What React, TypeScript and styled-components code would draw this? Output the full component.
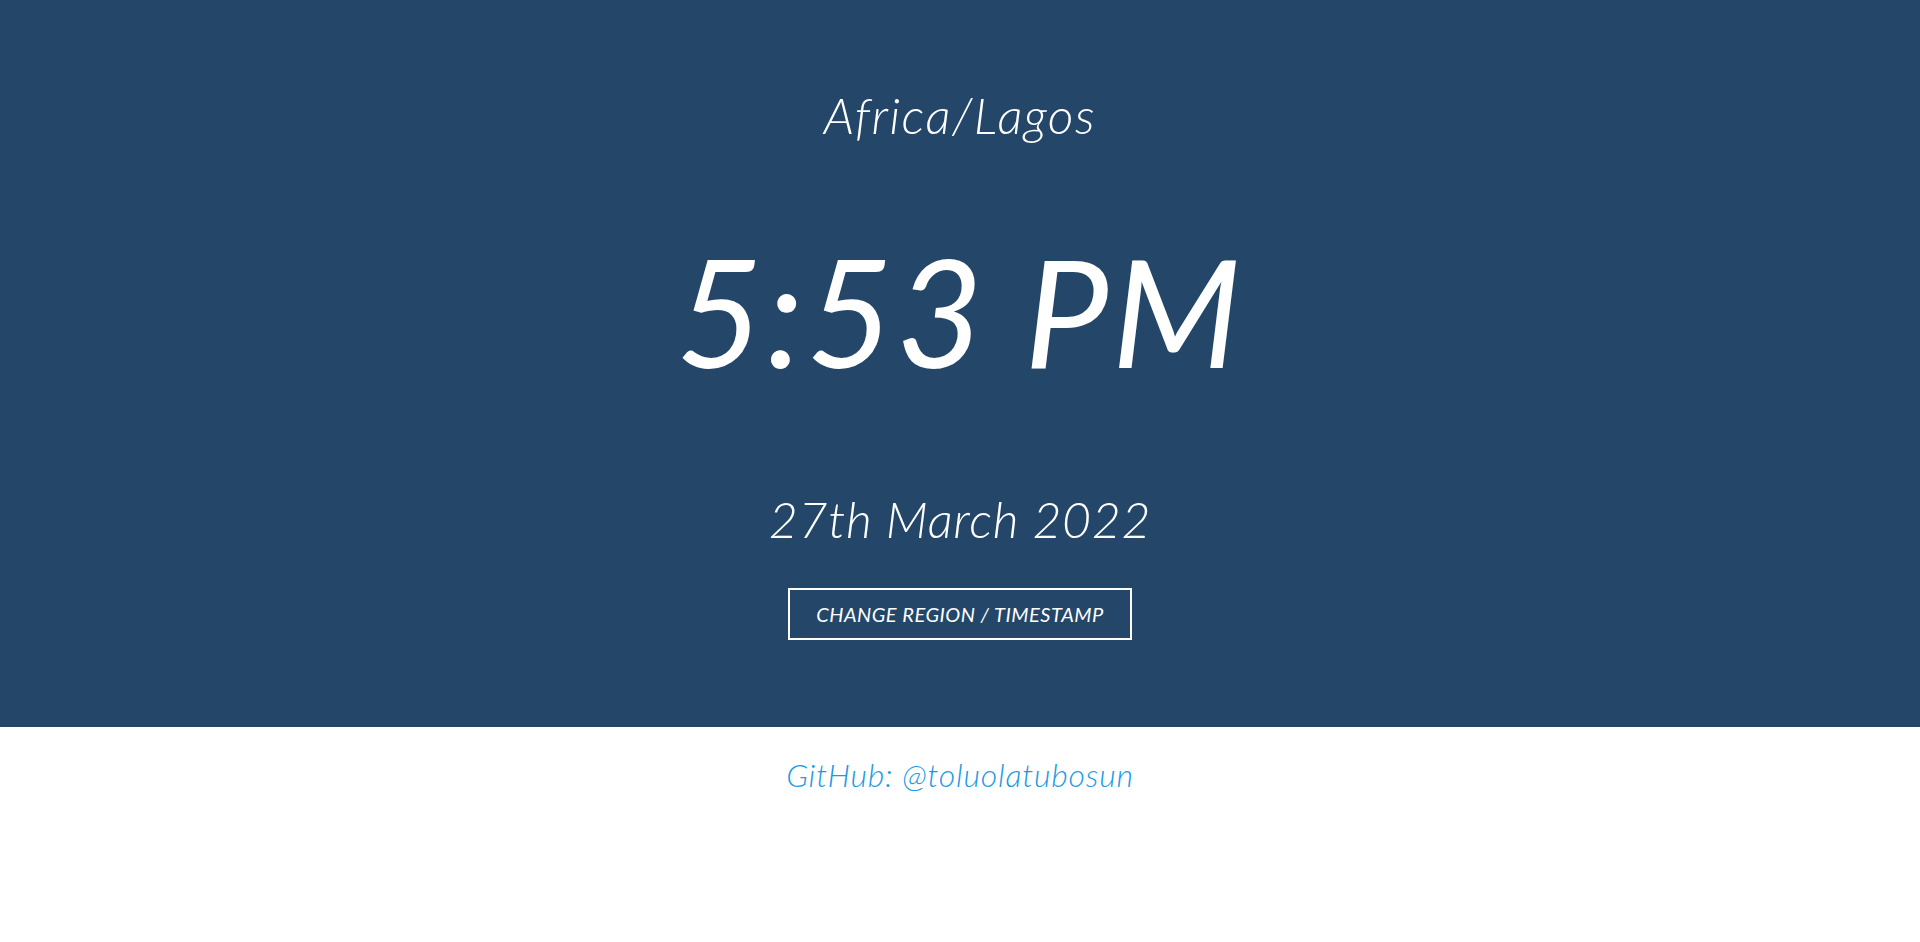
import React from "react";
import styled, { createGlobalStyle } from "styled-components";

const Global = createGlobalStyle`
  html, body { margin: 0; padding: 0; background: #ffffff; }
  body { font-family: "Lato", "Noto Sans", sans-serif; }
`;

const Page = styled.div`
  display: flex;
  flex-direction: column;
  min-height: 942px;
`;

const Hero = styled.section`
  background: #234669;
  height: 727px;
  display: flex;
  flex-direction: column;
  align-items: center;
  color: #ffffff;
  font-style: italic;
  font-weight: 300;
`;

const Region = styled.h2`
  margin: 0;
  margin-top: 85px;
  font-size: 50px;
  line-height: 60px;
  font-weight: 300;
  letter-spacing: 1.5px;
`;

const Time = styled.h1`
  margin: 0;
  margin-top: 85px;
  font-size: 150px;
  line-height: 160px;
  font-weight: 400;
  letter-spacing: 3px;
`;

const DateText = styled.h3`
  margin: 0;
  margin-top: 99px;
  font-size: 50px;
  line-height: 60px;
  font-weight: 300;
  letter-spacing: 0.7px;
`;

const ChangeButton = styled.button`
  margin-top: 39px;
  width: 344px;
  height: 52px;
  background: transparent;
  border: 2px solid #ffffff;
  color: #ffffff;
  font-family: inherit;
  font-style: italic;
  font-weight: 400;
  font-size: 20px;
  letter-spacing: 0.5px;
  cursor: pointer;
`;

const Footer = styled.footer`
  display: flex;
  justify-content: center;
  padding-top: 30px;
`;

const Link = styled.a`
  color: #1c9ae6;
  font-style: italic;
  font-weight: 300;
  font-size: 32px;
  line-height: 36px;
  letter-spacing: 0.8px;
  text-decoration: none;
`;

export default function App() {
  return (
    <Page>
      <Global />
      <Hero>
        <Region>Africa/Lagos</Region>
        <Time>5:53 PM</Time>
        <DateText>27th March 2022</DateText>
        <ChangeButton>CHANGE REGION / TIMESTAMP</ChangeButton>
      </Hero>
      <Footer>
        <Link href="#">GitHub: @toluolatubosun</Link>
      </Footer>
    </Page>
  );
}
